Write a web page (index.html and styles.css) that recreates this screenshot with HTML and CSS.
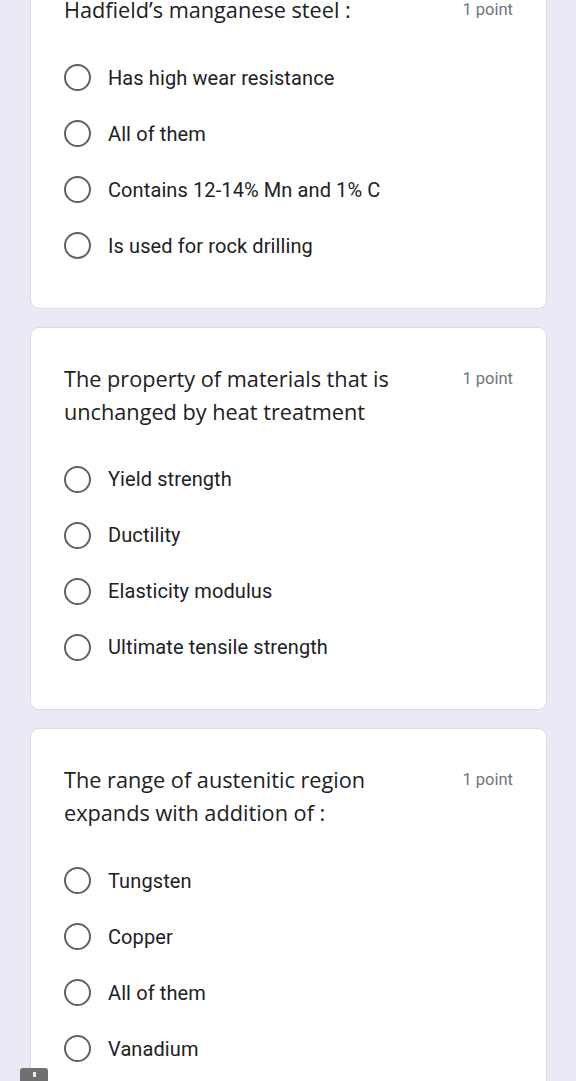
FILE: index.html
```html
<!doctype html>
<html>
  <head>
    <meta charset="utf-8">
    <title>Quiz</title>
    <meta name="viewport" content="width=device-width">
    <link rel="stylesheet" href="styles.css">
  </head>
  <body>
    <div class="form">
      <div class="card">
        <div class="question">
          <div class="title">Hadfield’s manganese steel :</div>
          <div class="points">1 point</div>
        </div>
        <div class="options">
          <label class="option"><span class="radio"></span><span class="text">Has high wear resistance</span></label>
          <label class="option"><span class="radio"></span><span class="text">All of them</span></label>
          <label class="option"><span class="radio"></span><span class="text">Contains 12-14% Mn and 1% C</span></label>
          <label class="option"><span class="radio"></span><span class="text">Is used for rock drilling</span></label>
        </div>
      </div>

      <div class="card">
        <div class="question">
          <div class="title">The property of materials that is unchanged by heat treatment</div>
          <div class="points">1 point</div>
        </div>
        <div class="options">
          <label class="option"><span class="radio"></span><span class="text">Yield strength</span></label>
          <label class="option"><span class="radio"></span><span class="text">Ductility</span></label>
          <label class="option"><span class="radio"></span><span class="text">Elasticity modulus</span></label>
          <label class="option"><span class="radio"></span><span class="text">Ultimate tensile strength</span></label>
        </div>
      </div>

      <div class="card">
        <div class="question">
          <div class="title">The range of austenitic region expands with addition of :</div>
          <div class="points">1 point</div>
        </div>
        <div class="options">
          <label class="option"><span class="radio"></span><span class="text">Tungsten</span></label>
          <label class="option"><span class="radio"></span><span class="text">Copper</span></label>
          <label class="option"><span class="radio"></span><span class="text">All of them</span></label>
          <label class="option"><span class="radio"></span><span class="text">Vanadium</span></label>
        </div>
      </div>
    </div>

    <div class="report"><span></span></div>
  </body>
</html>
```

FILE: styles.css
```css
body {
  margin: 0;
  background: #ece8f6;
  font-family: Roboto, "Liberation Sans", sans-serif;
  color: #202124;
}
.form {
  display: flex;
  flex-direction: column;
  gap: 18px;
  padding: 0 29px 0 30px;
  margin-top: -42px;
}
.card {
  background: #fff;
  border: 1px solid #dadce0;
  border-radius: 9px;
  padding: 34px 33px 34px 33px;
}
.question {
  display: flex;
  justify-content: space-between;
  align-items: flex-start;
  gap: 20px;
}
.title {
  font-family: "Open Sans", sans-serif;
  font-size: 21.7px;
  line-height: 33px;
  color: #202124;
  max-width: 360px;
}
.points {
  font-size: 16.5px;
  line-height: 33px;
  color: #70757a;
  white-space: nowrap;
}
.options {
  display: flex;
  flex-direction: column;
  margin-top: 23.5px;
}
.option {
  display: flex;
  align-items: center;
  gap: 17px;
  height: 56px;
}
.radio {
  width: 23px;
  height: 23px;
  border: 2.5px solid #5f6368;
  border-radius: 50%;
  flex-shrink: 0;
}
.text {
  font-size: 20px;
  letter-spacing: 0.1px;
}
.report {
  position: fixed;
  left: 20px;
  bottom: 0;
  width: 28px;
  height: 13px;
  background: #707070;
  border-radius: 3px 3px 0 0;
  display: flex;
  justify-content: center;
  padding-top: 4px;
  box-sizing: border-box;
}
.report span {
  width: 3px;
  height: 5px;
  background: #eee;
}
```
